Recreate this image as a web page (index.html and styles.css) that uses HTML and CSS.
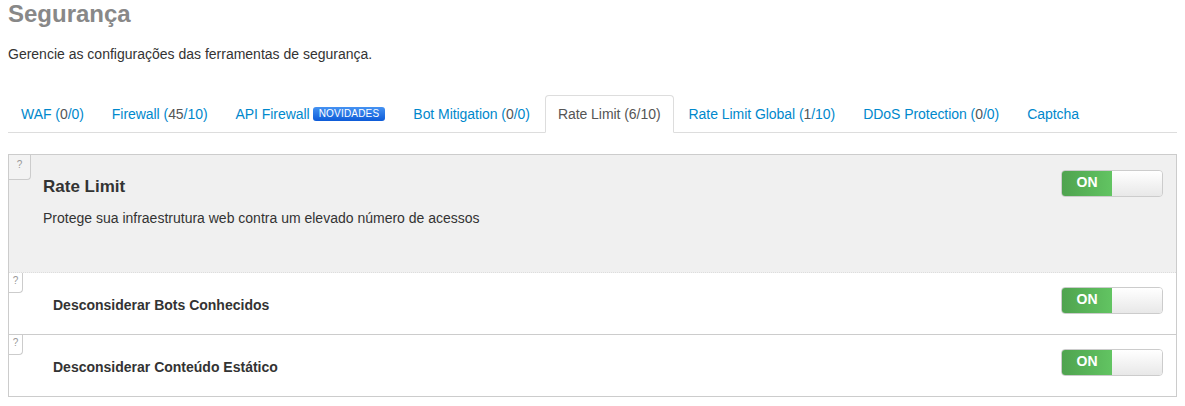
FILE: index.html
```html
<!DOCTYPE html>
<html lang="pt-BR">
<head>
    <meta charset="UTF-8">
    <meta name="viewport" content="width=device-width, initial-scale=1.0">
    <title>Segurança</title>
    <link rel="stylesheet" href="styles.css">
</head>
<body>
    <div class="page">
        <h1 class="page-title">Segurança</h1>
        <p class="page-lead">Gerencie as configurações das ferramentas de segurança.</p>

        <ul class="tabs">
            <li><a href="#">WAF (<span class="used">0</span>/0)</a></li>
            <li><a href="#">Firewall (<span class="used">45</span>/10)</a></li>
            <li><a href="#">API Firewall <span class="badge-new">NOVIDADES</span></a></li>
            <li><a href="#">Bot Mitigation (<span class="used">0</span>/0)</a></li>
            <li class="active"><a href="#">Rate Limit (6/10)</a></li>
            <li><a href="#">Rate Limit Global (<span class="used">1</span>/10)</a></li>
            <li><a href="#">DDoS Protection (<span class="used">0</span>/0)</a></li>
            <li><a href="#">Captcha</a></li>
        </ul>

        <div class="panel">
            <div class="panel-head">
                <span class="help help-big">?</span>
                <div class="panel-text">
                    <h2 class="panel-title">Rate Limit</h2>
                    <p class="panel-desc">Protege sua infraestrutura web contra um elevado número de acessos</p>
                </div>
                <div class="switch"><span class="switch-on">ON</span><span class="switch-off"></span></div>
            </div>
            <div class="option first">
                <span class="help">?</span>
                <span class="option-label">Desconsiderar Bots Conhecidos</span>
                <div class="switch"><span class="switch-on">ON</span><span class="switch-off"></span></div>
            </div>
            <div class="option">
                <span class="help">?</span>
                <span class="option-label">Desconsiderar Conteúdo Estático</span>
                <div class="switch"><span class="switch-on">ON</span><span class="switch-off"></span></div>
            </div>
        </div>
    </div>
</body>
</html>
```

FILE: styles.css
```css
body {
    margin: 0;
    font-family: 'Liberation Sans', Arial, sans-serif;
    font-size: 14px;
    line-height: 20px;
    color: #333;
    background: #fff;
}

.page {
    padding: 0 8px;
}

.page-title {
    margin: 0;
    font-size: 24px;
    line-height: 28px;
    font-weight: bold;
    color: #888;
}

.page-lead {
    margin: 16px 0 0;
}

/* Tabs */
.tabs {
    list-style: none;
    margin: 31px 0 0;
    padding: 0;
    display: flex;
    border-bottom: 1px solid #ddd;
}

.tabs li {
    margin-right: 2px;
    margin-bottom: -1px;
}

.tabs a {
    display: flex;
    align-items: center;
    padding: 8px 12px;
    line-height: 20px;
    letter-spacing: -0.05px;
    border: 1px solid transparent;
    border-radius: 4px 4px 0 0;
    color: #0088cc;
    text-decoration: none;
}

.tabs .used {
    color: #555;
}

.tabs .active a {
    color: #555;
    background: #fff;
    border-color: #ddd #ddd transparent;
}

.badge-new {
    display: inline-block;
    margin-left: 3px;
    padding: 0 6px;
    height: 14px;
    line-height: 14px;
    font-size: 10px;
    letter-spacing: 0.2px;
    color: #fff;
    border-radius: 3px;
    background: linear-gradient(to bottom, #4592f2, #0d5bd8);
}

/* Panel */
.panel {
    margin-top: 21px;
    border: 1px solid #ccc;
}

.panel-head {
    position: relative;
    display: flex;
    justify-content: space-between;
    align-items: flex-start;
    padding: 15px 13px 44px 34px;
    background: #f0f0f0;
    border-bottom: 1px dotted #ddd;
}

.panel-text {
    padding-top: 6px;
}

.panel-title {
    margin: 0;
    font-size: 17px;
    line-height: 22px;
    font-weight: bold;
}

.panel-desc {
    margin: 10px 0 0;
}

.help {
    position: absolute;
    top: 0;
    left: 0;
    width: 13px;
    height: 19px;
    font-size: 10px;
    line-height: 16px;
    text-align: center;
    color: #999;
    background: #fff;
    border: 1px solid #ccc;
    border-top: 0;
    border-left: 0;
    border-radius: 0 0 4px 0;
}

.help.help-big {
    width: 21px;
    height: 24px;
    line-height: 20px;
    background: #f3f3f3;
}

.option {
    position: relative;
    display: flex;
    justify-content: space-between;
    align-items: flex-start;
    height: 61px;
    box-sizing: border-box;
    padding: 14px 13px 0 44px;
    background: #fff;
}

.option + .option {
    border-top: 1px solid #ccc;
    height: 62px;
}

.option-label {
    font-weight: bold;
    margin-top: 8px;
}

/* Switch */
.switch {
    display: flex;
    width: 100px;
    height: 25px;
    border: 1px solid #ccc;
    border-radius: 4px;
    overflow: hidden;
}

.switch-on {
    width: 50px;
    line-height: 23px;
    text-align: center;
    font-weight: bold;
    color: #fff;
    background: linear-gradient(to right, #4fa34f, #62c462);
}

.switch-off {
    flex: 1;
    background: linear-gradient(to bottom, #fff, #e8e8e8);
}
```
